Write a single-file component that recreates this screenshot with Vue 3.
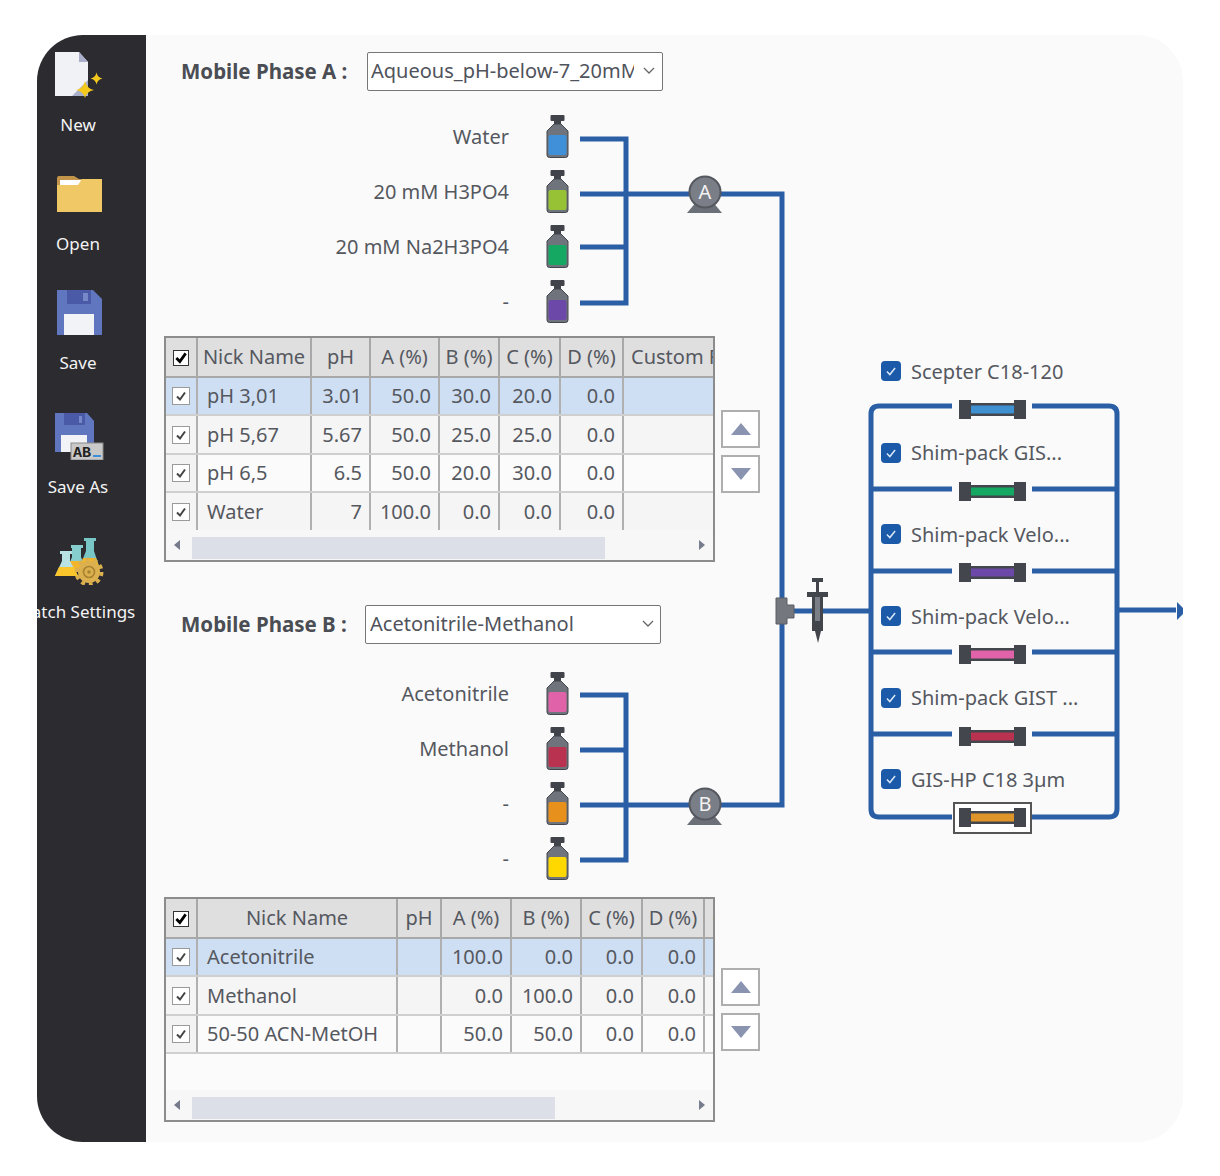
<template>
  <div class="page">
    <div class="window">
      <aside class="sidebar">
        <div class="tool">
          <svg class="tool-icon" viewBox="52 50 52 48">
            <path d="M55 52H79L88 62V96H55Z" fill="#f1f2f6" />
            <path d="M79 52L88 62H79Z" fill="#a9afc9" />
            <path d="M72 96L88 80V96Z" fill="#a9afc9" />
            <path d="M85 81Q86.500 88.500 94 90Q86.500 91.500 85 98Q83.500 91.500 76 90Q83.500 88.500 85 81Z" fill="#f5c91c" />
            <path d="M96.500 72.500Q97.500 77.500 102.500 78.500Q97.500 79.500 96.500 84.500Q95.500 79.500 90.500 78.500Q95.500 77.500 96.500 72.500Z" fill="#f5c91c" />
          </svg>
          <span>New</span>
        </div>
        <div class="tool">
          <svg class="tool-icon" viewBox="52 169 52 48">
            <path d="M57 178Q57 176 59 176H74L79 179H102V212H57Z" fill="#c2954a" />
            <path d="M60 180H82L79 185H60Z" fill="#fff" />
            <path d="M57 185H78L82 179H102V212H57Z" fill="#f0c865" />
          </svg>
          <span>Open</span>
        </div>
        <div class="tool">
          <svg class="tool-icon" viewBox="52 288 52 48">
            <path d="M57 290H93L102 299V335H57Z" fill="#6076bf" />
            <rect x="67" y="290" width="24" height="14" fill="#4a5aa6" />
            <rect x="83" y="293" width="5" height="8" fill="#7688c8" />
            <rect x="64" y="314" width="30" height="21" fill="#f2f3f7" />
          </svg>
          <span>Save</span>
        </div>
        <div class="tool tool-far">
          <svg class="tool-icon" viewBox="52 412 52 48">
            <path d="M55 413H87L94 421V452H55Z" fill="#6076bf" />
            <rect x="64" y="413" width="21" height="12" fill="#4a5aa6" />
            <rect x="79" y="416" width="3" height="7" fill="#7688c8" />
            <rect x="61" y="435" width="26" height="17" fill="#f2f3f7" />
            <rect x="71" y="443" width="32" height="17" fill="#c9c9c9" stroke="#8b8b8b" />
            <text x="73" y="456.500" class="ab-text">AB</text>
            <rect x="93" y="455" width="8" height="2" fill="#3d8fd6" />
          </svg>
          <span>Save As</span>
        </div>
        <div class="tool tool-last">
          <svg class="tool-icon" viewBox="52 537 52 48">
            <path d="M84 538H96V541H94V551L99 566H80L86 551V541H84Z" fill="#78c6c6" />
            <path d="M83 558H96L99 566H80Z" fill="#f2b52c" />
            <path d="M71 545H83V548H81V557L87 572H66L72 557V548H71Z" fill="#86cdcd" />
            <path d="M70 561H83L87 572H66Z" fill="#f2b52c" />
            <path d="M60 551H72V554H70V561L78 576H55L62 561V554H60Z" fill="#b9e2e2" />
            <path d="M59 567H74L78 576H55Z" fill="#fbc62b" />
            <circle cx="89" cy="572" r="12.500" fill="none" stroke="#dcb04e" stroke-width="4" stroke-dasharray="3.930 3.930" />
            <circle cx="89" cy="572" r="11" fill="#dcb04e" />
            <circle cx="89" cy="572" r="5.500" fill="none" stroke="#a7822f" stroke-width="1.600" />
            <circle cx="89" cy="572" r="1.800" fill="#a7822f" />
          </svg>
          <span>Batch Settings</span>
        </div>
      </aside>

      <main class="main">
        <svg class="flow" viewBox="146 35 1037 1107">
          <g class="pipe">
            <path d="M580 139H626V303H580M580 194H689M580 247H626M720 194H782V805H720M580 695H626V860H580M580 750H626M580 805H689M794 611H871M1117 610H1176" />
            <path d="M952 406H879Q871 406 871 414V809Q871 817 879 817H952M952 489H871M952 571H871M952 652H871M952 734H871" />
            <path d="M1032 406H1109Q1117 406 1117 414V809Q1117 817 1109 817H1032M1032 489H1117M1032 571H1117M1032 652H1117M1032 734H1117" />
          </g>
          <path d="M1177 602L1186 611L1177 620Z" fill="#2a5fa5" />
          <g v-for="pump in pumps" :key="pump.name">
            <path :d="`M687 ${pump.y + 21}H722L712 ${pump.y + 9}H697Z`" fill="#6b6f77" />
            <circle cx="705" :cy="pump.y" r="15.500" fill="#7a7e87" stroke="#55585f" stroke-width="2" />
            <text x="705" :y="pump.y + 7" class="pump-text">{{ pump.name }}</text>
          </g>
          <path d="M776 598H787V605H794V618H787V624H776Z" fill="#74777e" stroke="#5b5e65" />
          <g fill="#42454b">
            <rect x="812" y="578" width="11" height="4" />
            <rect x="816" y="582" width="3" height="10" />
            <rect x="807" y="592" width="21" height="5" />
            <rect x="812" y="597" width="11" height="34" />
            <path d="M815 631H821L818 643Z" />
          </g>
          <rect x="815" y="597" width="5" height="24" fill="#7a7e87" />
        </svg>

        <div class="left">
          <section v-for="phase in phases" :key="phase.name" class="phase" :class="phase.cls">
            <div class="phase-head">
              <label class="phase-label">{{ phase.name }} :</label>
              <div class="select">
                <span class="select-text">{{ phase.value }}</span>
                <svg class="chevron" viewBox="0 0 12 7"><path d="M1 1L6 6L11 1" /></svg>
              </div>
            </div>

            <div class="solvents">
              <div v-for="s in phase.solvents" :key="s.color" class="solvent">
                <span class="solvent-name">{{ s.name }}</span>
                <svg class="bottle" viewBox="0 0 23 43">
                  <rect x="4.500" y="0" width="14" height="6" rx="1" fill="#404349" />
                  <rect x="8" y="6" width="7" height="4" fill="#404349" />
                  <path d="M8 9H15L22 16V40Q22 42.500 19.500 42.500H3.500Q1 42.500 1 40V16Z" fill="#6f737b" stroke="#43464c" />
                  <rect x="2.500" y="20" width="18" height="20" rx="2" :fill="s.color" />
                </svg>
              </div>
            </div>

            <div class="table-row">
              <div class="grid-box">
                <div class="grid-area">
                  <table class="grid" :style="{ width: phase.widths.reduce((a, b) => a + b, 0) + 'px' }">
                    <colgroup>
                      <col v-for="(w, i) in phase.widths" :key="i" :style="{ width: w + 'px' }" />
                    </colgroup>
                    <thead>
                      <tr>
                        <th><span class="head-check"><svg viewBox="0 0 12 12"><path d="M2 6L5 9L10 2" /></svg></span></th>
                        <th v-for="h in headers" :key="h">{{ h }}</th>
                      </tr>
                    </thead>
                    <tbody>
                      <tr v-for="(row, r) in phase.rows" :key="row[0]" :class="{ selected: r === 0, odd: r % 2 === 1 }">
                        <td><span class="row-check"><svg viewBox="0 0 12 12"><path d="M2 6.500L5 9.500L10 2.500" /></svg></span></td>
                        <td class="name">{{ row[0] }}</td>
                        <td v-for="(v, c) in row.slice(1)" :key="c" class="num">{{ v }}</td>
                        <td></td>
                      </tr>
                    </tbody>
                  </table>
                </div>
                <div class="scrollbar">
                  <span class="arrow-left"></span>
                  <div class="track"><div class="thumb" :style="{ width: phase.thumb + 'px' }"></div></div>
                  <span class="arrow-right"></span>
                </div>
              </div>
              <div class="move-btns">
                <div class="move-btn"><span class="tri-up"></span></div>
                <div class="move-btn"><span class="tri-down"></span></div>
              </div>
            </div>
          </section>
        </div>

        <div class="columns">
          <div v-for="(col, i) in columns" :key="col.color" class="column-row">
            <div class="column-label">
              <span class="col-check"><svg viewBox="0 0 12 12"><path d="M2.500 6.500L5 9L9.500 3.500" /></svg></span>
              <span>{{ col.name }}</span>
            </div>
            <div class="chip" :class="{ active: i === columns.length - 1 }">
              <svg viewBox="0 0 67 19" class="chip-svg">
                <rect x="0" y="0" width="12" height="19" fill="#43464c" />
                <rect x="55" y="0" width="12" height="19" fill="#43464c" />
                <rect x="12" y="3" width="43" height="13" fill="#43464c" />
                <rect x="12" y="5.500" width="43" height="8" :fill="col.color" />
              </svg>
            </div>
          </div>
        </div>
      </main>
    </div>
  </div>
</template>

<script setup>
const headers = ['Nick Name', 'pH', 'A (%)', 'B (%)', 'C (%)', 'D (%)', 'Custom Flow']

const phases = [
  {
    name: 'Mobile Phase A',
    cls: 'phase-a',
    value: 'Aqueous_pH-below-7_20mM',
    thumb: 413,
    widths: [31, 114, 59, 69, 60, 61, 63, 120],
    solvents: [
      { name: 'Water', color: '#3f90d8' },
      { name: '20 mM H3PO4', color: '#97c235' },
      { name: '20 mM Na2H3PO4', color: '#14a862' },
      { name: '-', color: '#6c48a8' }
    ],
    rows: [
      ['pH 3,01', '3.01', '50.0', '30.0', '20.0', '0.0'],
      ['pH 5,67', '5.67', '50.0', '25.0', '25.0', '0.0'],
      ['pH 6,5', '6.5', '50.0', '20.0', '30.0', '0.0'],
      ['Water', '7', '100.0', '0.0', '0.0', '0.0']
    ]
  },
  {
    name: 'Mobile Phase B',
    cls: 'phase-b',
    value: 'Acetonitrile-Methanol',
    thumb: 363,
    widths: [31, 200, 44, 70, 70, 61, 62, 60],
    solvents: [
      { name: 'Acetonitrile', color: '#e062a8' },
      { name: 'Methanol', color: '#b93250' },
      { name: '-', color: '#e8901c' },
      { name: '-', color: '#ffd800' }
    ],
    rows: [
      ['Acetonitrile', '', '100.0', '0.0', '0.0', '0.0'],
      ['Methanol', '', '0.0', '100.0', '0.0', '0.0'],
      ['50-50 ACN-MetOH', '', '50.0', '50.0', '0.0', '0.0']
    ]
  }
]

const pumps = [
  { name: 'A', y: 192 },
  { name: 'B', y: 804 }
]

const columns = [
  { name: 'Scepter C18-120', color: '#3f90d0' },
  { name: 'Shim-pack GIS...', color: '#14a862' },
  { name: 'Shim-pack Velo...', color: '#6c48a8' },
  { name: 'Shim-pack Velo...', color: '#e062a8' },
  { name: 'Shim-pack GIST ...', color: '#b93250' },
  { name: 'GIS-HP C18 3µm', color: '#e0952a' }
]
</script>

<style scoped>
.page { width: 1220px; height: 1176px; background: #fff; padding: 35px 0 0 37px; box-sizing: border-box; font-family: "Noto Sans", sans-serif; color: #55585f; }
.window { width: 1146px; height: 1107px; border-radius: 46px; overflow: hidden; display: flex; background: #fafafa; }

.sidebar { width: 109px; flex: none; background: #2b2b30; padding-top: 15px; box-sizing: border-box; display: flex; flex-direction: column; color: #f4f4f4; font-size: 17px; }
.tool { width: 82px; height: 119px; display: flex; flex-direction: column; align-items: center; white-space: nowrap; }
.tool-far { margin-top: 5px; }
.tool-last { margin-top: 6px; }
.tool-icon { width: 52px; height: 48px; flex: none; display: block; margin-bottom: 15px; }
.tool span { line-height: 24px; }
.ab-text { font-family: "Liberation Mono", monospace; font-size: 15px; font-weight: 700; fill: #222; }

.main { flex: 1; position: relative; display: flex; }
.flow { position: absolute; left: 0; top: 0; width: 1037px; height: 1107px; }
.pipe path { fill: none; stroke: #2a5fa5; stroke-width: 5; }
.pump-text { font-family: "Noto Sans", sans-serif; font-size: 20px; fill: #f2f2f2; text-anchor: middle; }

.left { width: 620px; flex: none; position: relative; }
.phase-a { padding-top: 17px; }
.phase-b { padding-top: 43px; }
.phase-head { display: flex; align-items: center; height: 39px; padding-left: 35px; }
.phase-label { width: 186px; font-weight: 700; font-size: 20.5px; color: #4a4d54; white-space: nowrap; margin-bottom: 2px; }
.phase-b .phase-label { width: 184px; }
.select { width: 296px; height: 39px; box-sizing: border-box; border: 1px solid #777; border-radius: 2px; background: #fff; display: flex; align-items: center; padding: 0 0 2px 3px; font-size: 20px; color: #50535b; }
.phase-b .select { padding-left: 4px; }
.select-text { width: 263px; overflow: hidden; white-space: nowrap; }
.chevron { width: 12px; height: 7px; margin-left: 9px; }
.chevron path { fill: none; stroke: #666; stroke-width: 1.3; }

.solvents { padding-top: 18px; padding-bottom: 7px; }
.phase-b .solvents { padding-top: 22px; padding-bottom: 11px; }
.solvent { height: 55px; display: flex; align-items: center; font-size: 20px; }
.solvent-name { width: 363px; text-align: right; white-space: nowrap; }
.bottle { width: 23px; height: 43px; margin-left: 37px; }

.table-row { display: flex; align-items: flex-start; padding-left: 18px; gap: 6px; }
.grid-box { width: 551px; height: 226px; box-sizing: border-box; border: 2px solid #8c8c8c; background: #fbfbfb; display: flex; flex-direction: column; overflow: hidden; }
.phase-b .grid-box { height: 225px; }
.grid-area { flex: 1; overflow: hidden; }
.grid { table-layout: fixed; border-collapse: collapse; font-size: 20px; white-space: nowrap; }
.grid th { height: 37.5px; padding: 0; background: #dfdfdf; font-weight: 400; border-right: 2px solid #a8a8a8; border-bottom: 2px solid #a8a8a8; overflow: hidden; text-overflow: clip; }
.grid td { height: 36.6px; padding: 0; border-right: 2px solid #b0b0b0; border-bottom: 2px solid #cfcfcf; background: #fbfbfb; overflow: hidden; }
.grid tr.odd td { background: #f5f5f5; }
.grid tr.selected td { background: #cfdff3; }
.grid td:first-child, .grid th:first-child { text-align: center; background: #f3f3f3; }
.grid th:first-child { background: #dfdfdf; }
.grid tr.selected td:first-child { background: #cfdff3; }
.grid td.name { padding-left: 9px; }
.grid td.num { text-align: right; padding-right: 7px; }
.grid th:last-child, .grid td:last-child { text-align: left; padding-left: 7px; }
.head-check { display: inline-flex; width: 14px; height: 14px; border: 1px solid #333; background: #fff; vertical-align: middle; margin-bottom: 2px; }
.head-check svg { width: 14px; height: 14px; }
.head-check path { fill: none; stroke: #000; stroke-width: 2.4; }
.row-check { display: inline-flex; width: 18px; height: 18px; box-sizing: border-box; border: 1px solid #9a9a9a; background: #fff; vertical-align: middle; padding: 2px; margin-bottom: 4px; }
.row-check svg { width: 100%; height: 100%; }
.row-check path { fill: none; stroke: #444; stroke-width: 2; }

.scrollbar { height: 30px; flex: none; display: flex; align-items: center; background: #f7f7f7; padding: 0 8px; box-sizing: border-box; }
.track { flex: 1; height: 22px; margin: 0 8px 1px 12px; align-self: flex-end; }
.thumb { height: 22px; background: #dcdfe8; margin-left: 0; }
.arrow-left { width: 0; height: 0; border: 5px solid transparent; border-right: 6px solid #767c8c; border-left: 0; }
.arrow-right { width: 0; height: 0; border: 5px solid transparent; border-left: 6px solid #767c8c; border-right: 0; }

.move-btns { display: flex; flex-direction: column; gap: 7px; padding-top: 74px; }
.phase-b .move-btns { padding-top: 71px; }
.move-btn { width: 39px; height: 38px; box-sizing: border-box; border: 2px solid #aeaeae; background: #fff; display: flex; align-items: center; justify-content: center; }
.tri-up { width: 0; height: 0; border-left: 10px solid transparent; border-right: 10px solid transparent; border-bottom: 12px solid #8a93b0; }
.tri-down { width: 0; height: 0; border-left: 10px solid transparent; border-right: 10px solid transparent; border-top: 12px solid #8a93b0; }

.columns { position: relative; margin-left: 115px; padding-top: 325px; }
.column-row { height: 81.7px; position: relative; }
.column-label { display: flex; align-items: center; gap: 10px; height: 22px; font-size: 20px; white-space: nowrap; }
.col-check { width: 20px; height: 20px; border-radius: 4px; background: #1a5aa8; display: flex; align-items: center; justify-content: center; }
.col-check svg { width: 14px; height: 14px; }
.col-check path { fill: none; stroke: #dbe8f8; stroke-width: 1.3; }
.chip { position: absolute; left: 72px; top: 33.5px; width: 79px; height: 32px; box-sizing: border-box; display: flex; align-items: center; justify-content: center; border: 2px solid transparent; }
.chip.active { background: #fff; border-color: #555; }
.chip-svg { width: 67px; height: 19px; flex: none; }
</style>
